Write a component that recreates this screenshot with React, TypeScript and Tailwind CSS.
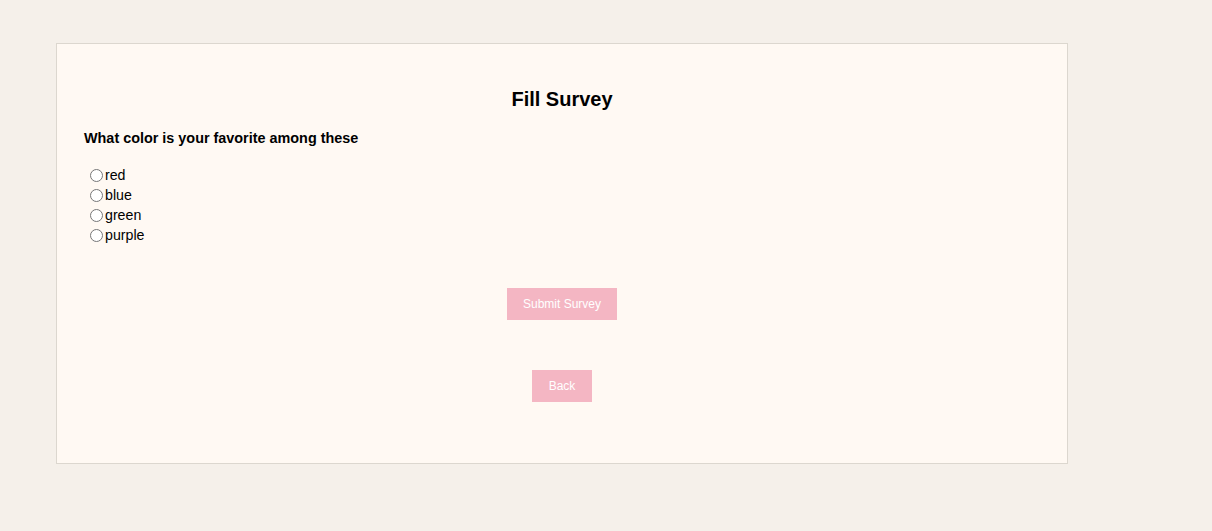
const OPTIONS = ['red', 'blue', 'green', 'purple']

export default function App() {
  return (
    <div className="min-h-screen bg-[#f5f0ea] pl-[56px] pt-[43px] font-['Liberation_Sans',Arial,sans-serif] text-black">
      <div className="h-[421px] w-[1012px] border border-[#dcd7cf] bg-[#fff9f3] px-[27px] pt-[44px]">
        <h2 className="text-center text-[20px] font-bold leading-[23px]">Fill Survey</h2>
        <p className="mt-[19px] text-[14.4px] font-bold leading-[16px]">What color is your favorite among these</p>

        <div className="mt-[20px]">
          {OPTIONS.map((o) => (
            <label key={o} className="flex h-5 items-center text-[14.2px]">
              <input type="radio" name="color" value={o} className="mb-[1px] ml-[6px] mr-[2px] size-[13px]" />
              {o}
            </label>
          ))}
        </div>

        <div className="mt-[42px] flex flex-col items-center gap-[50px]">
          <button className="h-[32px] w-[110px] bg-[#f4b6c3] text-[12px] text-white">Submit Survey</button>
          <button className="h-[32px] w-[60px] bg-[#f4b6c3] text-[12px] text-white">Back</button>
        </div>
      </div>
    </div>
  )
}
